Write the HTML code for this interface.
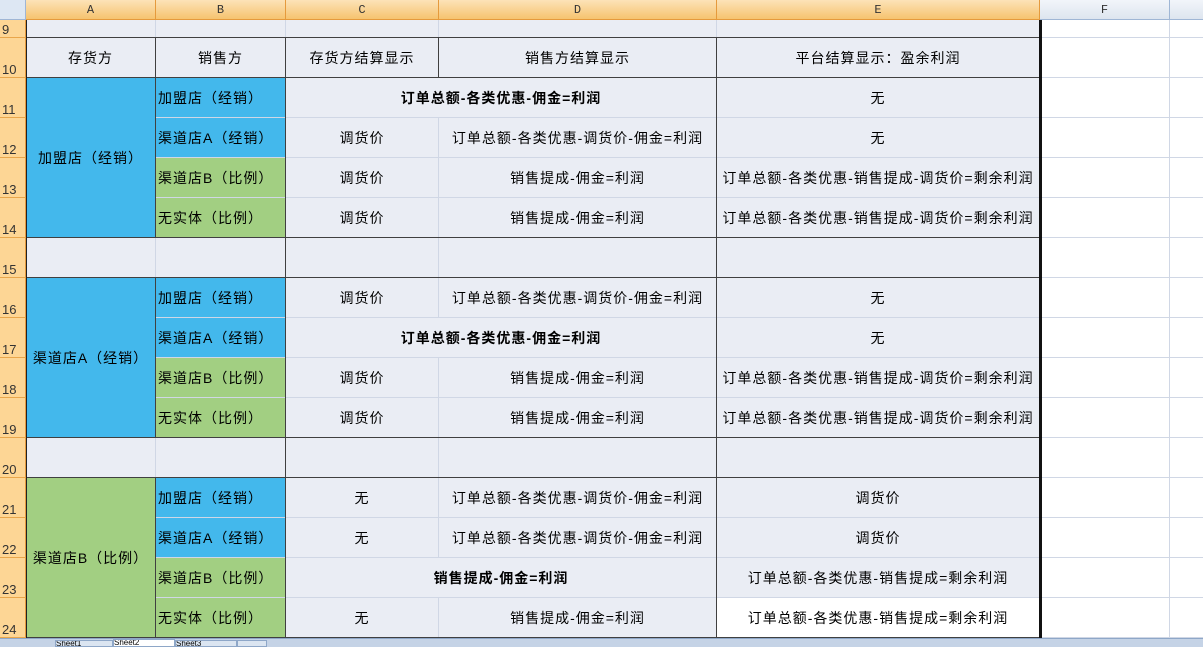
<!DOCTYPE html>
<html><head><meta charset="utf-8"><style>
*{margin:0;padding:0;box-sizing:border-box}
body{width:1203px;height:647px;overflow:hidden;background:#fff;position:relative;font-family:"Liberation Sans","Noto Sans CJK SC",sans-serif;font-size:14px;color:#000}
.c{position:absolute;display:flex;align-items:center;justify-content:center;white-space:nowrap;overflow:hidden;border-right:1px solid #d0d7e5;border-bottom:1px solid #d0d7e5;letter-spacing:1px}
.g{background:#eaedf4}.bl{background:#43b8ec}.gr{background:#a2cf82}.w{background:#fff}
.l{justify-content:flex-start;padding-left:2px}
.b{font-weight:bold}
.h{position:absolute;background:#404040;height:1px}
.v{position:absolute;background:#404040;width:1px}
.ch{position:absolute;top:0;height:20px;background:linear-gradient(#fce3b8,#f6c36f);border-right:1px solid #e59a3c;border-bottom:1px solid #e59a3c;font-family:"Liberation Mono",monospace;font-size:12px;display:flex;align-items:center;justify-content:center;color:#333}
.rh{position:absolute;left:0;width:26px;background:#fdd695;border-bottom:1px solid #e9a64b;border-right:1px solid #e59a3c;font-family:"Liberation Sans",sans-serif;font-size:13px;display:flex;align-items:flex-end;padding-left:2px;color:#333}
</style></head><body>
<div style="position:absolute;left:0;top:0;width:26px;height:20px;background:#dde7f3;border-right:1px solid #9fb6d5;border-bottom:1px solid #9fb6d5"></div>
<div class="ch" style="left:26px;width:130px">A</div>
<div class="ch" style="left:156px;width:130px">B</div>
<div class="ch" style="left:286px;width:153px">C</div>
<div class="ch" style="left:439px;width:278px">D</div>
<div class="ch" style="left:717px;width:323px">E</div>
<div class="ch" style="left:1040px;width:130px;background:linear-gradient(#f2f5fa,#dde5ef);border-color:#9fb6d5">F</div>
<div class="ch" style="left:1170px;width:40px;background:linear-gradient(#f2f5fa,#dde5ef);border-color:#9fb6d5"></div>

<div class="rh" style="top:20px;height:18px">9</div>
<div class="rh" style="top:38px;height:40px">10</div>
<div class="rh" style="top:78px;height:40px">11</div>
<div class="rh" style="top:118px;height:40px">12</div>
<div class="rh" style="top:158px;height:40px">13</div>
<div class="rh" style="top:198px;height:40px">14</div>
<div class="rh" style="top:238px;height:40px">15</div>
<div class="rh" style="top:278px;height:40px">16</div>
<div class="rh" style="top:318px;height:40px">17</div>
<div class="rh" style="top:358px;height:40px">18</div>
<div class="rh" style="top:398px;height:40px">19</div>
<div class="rh" style="top:438px;height:40px">20</div>
<div class="rh" style="top:478px;height:40px">21</div>
<div class="rh" style="top:518px;height:40px">22</div>
<div class="rh" style="top:558px;height:40px">23</div>
<div class="rh" style="top:598px;height:40px">24</div>

<div style="position:absolute;left:1040px;top:20px;width:163px;height:618px;background:repeating-linear-gradient(#fff 0,#fff 39px,#d0d7e5 39px,#d0d7e5 40px);background-position:0 18px"></div>
<div style="position:absolute;left:1040px;top:37px;width:163px;height:1px;background:#d0d7e5"></div>
<div style="position:absolute;left:1169px;top:20px;width:1px;height:618px;background:#d0d7e5"></div>

<div class="c g" style="left:26px;top:20px;width:130px;height:18px"></div>
<div class="c g" style="left:156px;top:20px;width:130px;height:18px"></div>
<div class="c g" style="left:286px;top:20px;width:153px;height:18px"></div>
<div class="c g" style="left:439px;top:20px;width:278px;height:18px"></div>
<div class="c g" style="left:717px;top:20px;width:323px;height:18px"></div>

<div class="c g" style="left:26px;top:38px;width:130px;height:40px">存货方</div>
<div class="c g" style="left:156px;top:38px;width:130px;height:40px">销售方</div>
<div class="c g" style="left:286px;top:38px;width:153px;height:40px">存货方结算显示</div>
<div class="c g" style="left:439px;top:38px;width:278px;height:40px">销售方结算显示</div>
<div class="c g" style="left:717px;top:38px;width:323px;height:40px">平台结算显示：盈余利润</div>

<div class="c bl" style="left:26px;top:78px;width:130px;height:160px">加盟店（经销）</div>
<div class="c bl l" style="left:156px;top:78px;width:130px;height:40px">加盟店（经销）</div>
<div class="c bl l" style="left:156px;top:118px;width:130px;height:40px">渠道店A（经销）</div>
<div class="c gr l" style="left:156px;top:158px;width:130px;height:40px">渠道店B（比例）</div>
<div class="c gr l" style="left:156px;top:198px;width:130px;height:40px">无实体（比例）</div>
<div class="c g b" style="left:286px;top:78px;width:431px;height:40px">订单总额-各类优惠-佣金=利润</div>
<div class="c g" style="left:717px;top:78px;width:323px;height:40px">无</div>
<div class="c g" style="left:286px;top:118px;width:153px;height:40px">调货价</div>
<div class="c g" style="left:439px;top:118px;width:278px;height:40px">订单总额-各类优惠-调货价-佣金=利润</div>
<div class="c g" style="left:717px;top:118px;width:323px;height:40px">无</div>
<div class="c g" style="left:286px;top:158px;width:153px;height:40px">调货价</div>
<div class="c g" style="left:439px;top:158px;width:278px;height:40px">销售提成-佣金=利润</div>
<div class="c g" style="left:717px;top:158px;width:323px;height:40px">订单总额-各类优惠-销售提成-调货价=剩余利润</div>
<div class="c g" style="left:286px;top:198px;width:153px;height:40px">调货价</div>
<div class="c g" style="left:439px;top:198px;width:278px;height:40px">销售提成-佣金=利润</div>
<div class="c g" style="left:717px;top:198px;width:323px;height:40px">订单总额-各类优惠-销售提成-调货价=剩余利润</div>

<div class="c g" style="left:26px;top:238px;width:130px;height:40px"></div>
<div class="c g" style="left:156px;top:238px;width:130px;height:40px"></div>
<div class="c g" style="left:286px;top:238px;width:153px;height:40px"></div>
<div class="c g" style="left:439px;top:238px;width:278px;height:40px"></div>
<div class="c g" style="left:717px;top:238px;width:323px;height:40px"></div>

<div class="c bl" style="left:26px;top:278px;width:130px;height:160px">渠道店A（经销）</div>
<div class="c bl l" style="left:156px;top:278px;width:130px;height:40px">加盟店（经销）</div>
<div class="c bl l" style="left:156px;top:318px;width:130px;height:40px">渠道店A（经销）</div>
<div class="c gr l" style="left:156px;top:358px;width:130px;height:40px">渠道店B（比例）</div>
<div class="c gr l" style="left:156px;top:398px;width:130px;height:40px">无实体（比例）</div>
<div class="c g" style="left:286px;top:278px;width:153px;height:40px">调货价</div>
<div class="c g" style="left:439px;top:278px;width:278px;height:40px">订单总额-各类优惠-调货价-佣金=利润</div>
<div class="c g" style="left:717px;top:278px;width:323px;height:40px">无</div>
<div class="c g b" style="left:286px;top:318px;width:431px;height:40px">订单总额-各类优惠-佣金=利润</div>
<div class="c g" style="left:717px;top:318px;width:323px;height:40px">无</div>
<div class="c g" style="left:286px;top:358px;width:153px;height:40px">调货价</div>
<div class="c g" style="left:439px;top:358px;width:278px;height:40px">销售提成-佣金=利润</div>
<div class="c g" style="left:717px;top:358px;width:323px;height:40px">订单总额-各类优惠-销售提成-调货价=剩余利润</div>
<div class="c g" style="left:286px;top:398px;width:153px;height:40px">调货价</div>
<div class="c g" style="left:439px;top:398px;width:278px;height:40px">销售提成-佣金=利润</div>
<div class="c g" style="left:717px;top:398px;width:323px;height:40px">订单总额-各类优惠-销售提成-调货价=剩余利润</div>

<div class="c g" style="left:26px;top:438px;width:130px;height:40px"></div>
<div class="c g" style="left:156px;top:438px;width:130px;height:40px"></div>
<div class="c g" style="left:286px;top:438px;width:153px;height:40px"></div>
<div class="c g" style="left:439px;top:438px;width:278px;height:40px"></div>
<div class="c g" style="left:717px;top:438px;width:323px;height:40px"></div>

<div class="c gr" style="left:26px;top:478px;width:130px;height:160px">渠道店B（比例）</div>
<div class="c bl l" style="left:156px;top:478px;width:130px;height:40px">加盟店（经销）</div>
<div class="c bl l" style="left:156px;top:518px;width:130px;height:40px">渠道店A（经销）</div>
<div class="c gr l" style="left:156px;top:558px;width:130px;height:40px">渠道店B（比例）</div>
<div class="c gr l" style="left:156px;top:598px;width:130px;height:40px">无实体（比例）</div>
<div class="c g" style="left:286px;top:478px;width:153px;height:40px">无</div>
<div class="c g" style="left:439px;top:478px;width:278px;height:40px">订单总额-各类优惠-调货价-佣金=利润</div>
<div class="c g" style="left:717px;top:478px;width:323px;height:40px">调货价</div>
<div class="c g" style="left:286px;top:518px;width:153px;height:40px">无</div>
<div class="c g" style="left:439px;top:518px;width:278px;height:40px">订单总额-各类优惠-调货价-佣金=利润</div>
<div class="c g" style="left:717px;top:518px;width:323px;height:40px">调货价</div>
<div class="c g b" style="left:286px;top:558px;width:431px;height:40px">销售提成-佣金=利润</div>
<div class="c g" style="left:717px;top:558px;width:323px;height:40px">订单总额-各类优惠-销售提成=剩余利润</div>
<div class="c g" style="left:286px;top:598px;width:153px;height:40px">无</div>
<div class="c g" style="left:439px;top:598px;width:278px;height:40px">销售提成-佣金=利润</div>
<div class="c w" style="left:717px;top:598px;width:323px;height:40px">订单总额-各类优惠-销售提成=剩余利润</div>

<div class="h" style="left:26px;top:37px;width:1014px"></div>
<div class="h" style="left:26px;top:77px;width:1014px"></div>
<div class="h" style="left:26px;top:237px;width:1014px"></div>
<div class="h" style="left:26px;top:277px;width:1014px"></div>
<div class="h" style="left:26px;top:437px;width:1014px"></div>
<div class="h" style="left:26px;top:477px;width:1014px"></div>
<div class="h" style="left:26px;top:637px;width:1014px"></div>
<div class="v" style="left:155px;top:38px;height:200px"></div>
<div class="v" style="left:155px;top:278px;height:160px"></div>
<div class="v" style="left:155px;top:478px;height:160px"></div>
<div class="v" style="left:285px;top:38px;height:600px"></div>
<div class="v" style="left:438px;top:38px;height:40px"></div>
<div class="v" style="left:716px;top:38px;height:600px"></div>
<div class="v" style="left:26px;top:20px;height:618px;background:#222"></div>
<div class="v" style="left:1039px;top:20px;height:618px;width:3px;background:#111"></div>

<div style="position:absolute;left:0;top:638px;width:1203px;height:9px;background:#c5d3e6;border-top:1px solid #8ea7c8"></div>
<div style="position:absolute;left:55px;top:640px;width:58px;height:7px;background:#dbe5f1;border:1px solid #8ea7c8;font-size:8px;overflow:hidden;line-height:6px">Sheet1</div>
<div style="position:absolute;left:113px;top:639px;width:62px;height:8px;background:#fff;border:1px solid #8ea7c8;font-size:8px;overflow:hidden;line-height:6px">Sheet2</div>
<div style="position:absolute;left:175px;top:640px;width:62px;height:7px;background:#dbe5f1;border:1px solid #8ea7c8;font-size:8px;overflow:hidden;line-height:6px">Sheet3</div>
<div style="position:absolute;left:237px;top:640px;width:30px;height:7px;background:#dbe5f1;border:1px solid #8ea7c8"></div>
</body></html>
